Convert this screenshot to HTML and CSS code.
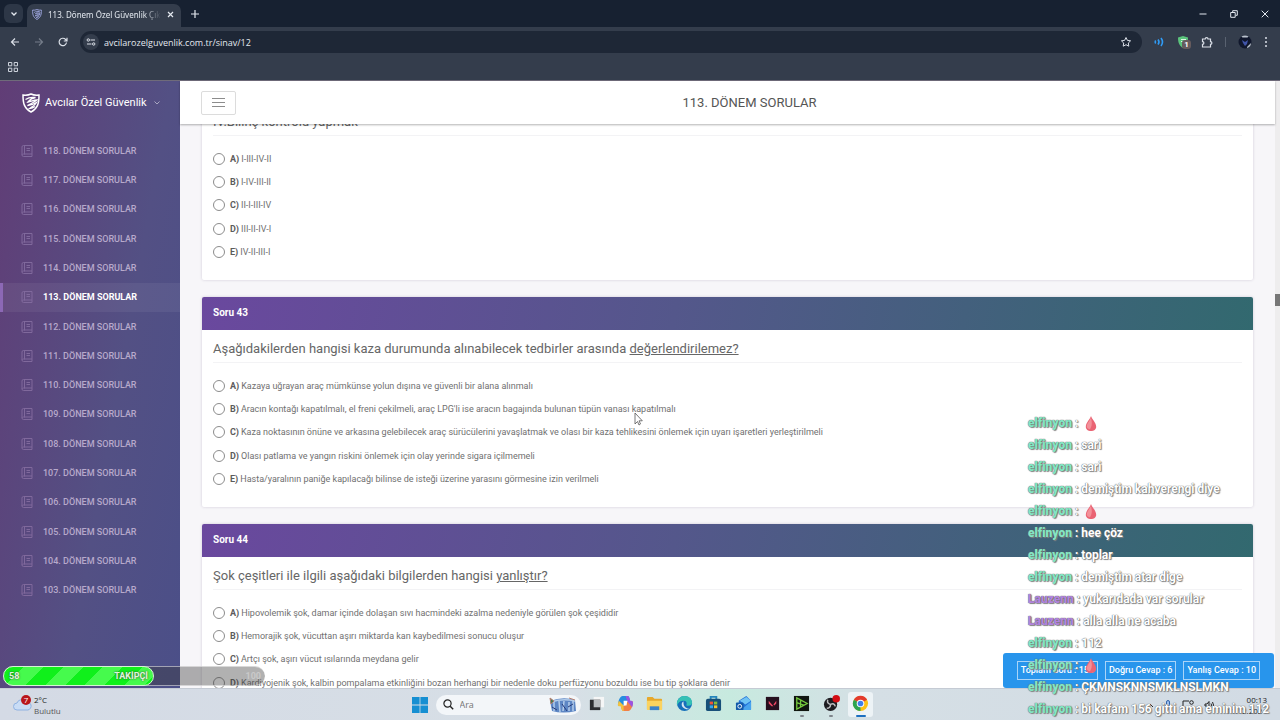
FILE: index.html
```
<!DOCTYPE html>
<html lang="tr">
<head>
    <meta charset="UTF-8">
    <meta name="viewport" content="width=device-width, initial-scale=1.0">
    <title>113. Dönem Özel Güvenlik Çıkmış Sorular</title>
    <link rel="stylesheet" href="styles.css">
</head>
<body>
    <svg class="symbols" aria-hidden="true">
        <symbol id="shield" viewBox="0 0 18 20">
            <path d="M9 1C6.500 2.200 3.500 2.300 1 2c0 7 .5 13 8 17 7.500-4 8-10 8-17-2.500.3-5.500.2-8-1z" fill="none" stroke="currentColor" stroke-width="1.500"/>
            <path d="M3.500 6.500C7 4 10 4 13.500 4.500 10 5 8 6.500 6 9c4-1 6-2 9-2-3 2.500-6 3.500-9.500 5.500 4-.5 6.500-1.500 9-3-1.500 3-4 4-7 6 2.500 0 4-.8 5.500-2" fill="none" stroke="currentColor" stroke-width="1.300"/>
        </symbol>
        <symbol id="book" viewBox="0 0 12 12">
            <path d="M2.500.5h8.500v11H2.500A1.500 1.500 0 0 1 1 10V2A1.500 1.500 0 0 1 2.500.5zM3.500.5v9M1 10c0-.5.5-1 1.500-1H11M5.500 3.500h3.500M5.500 5.500h3.500" fill="none" stroke="currentColor"/>
        </symbol>
        <symbol id="drop" viewBox="0 0 12 18">
            <path d="M6 1c1 3.500 5.500 7 5.500 11.500C11.500 15.500 9 17 6 17S.5 15.500.5 12.500C.5 8 5 4.500 6 1z" fill="#ea6474"/>
            <path d="M6 2c0 3.500 2.500 7-1 13-2 0-3.500-1-3.500-3C1.500 9 5 6 6 2z" fill="#f39099"/>
        </symbol>
    </svg>

    <!-- Browser -->
    <div class="tabstrip">
        <button class="tab-search" aria-label="Sekme ara"><svg width="8" height="8" viewBox="0 0 8 8"><path d="M1.500 2.500 4 5l2.500-2.500" fill="none" stroke="currentColor" stroke-width="1.300"/></svg></button>
        <div class="tab">
            <svg class="tab-icon"><use href="#shield"/></svg>
            <span class="tab-title">113. Dönem Özel Güvenlik Çıkmış</span>
            <button aria-label="Kapat"><svg width="7" height="7" viewBox="0 0 7 7"><path d="m1 1 5 5M6 1 1 6" stroke="currentColor" stroke-width="1.200"/></svg></button>
        </div>
        <button class="new-tab" aria-label="Yeni sekme"><svg width="8" height="8" viewBox="0 0 8 8"><path d="M4 0v8M0 4h8" stroke="currentColor" stroke-width="1.200"/></svg></button>
        <div class="window-buttons">
            <button aria-label="Küçült"><svg width="8" height="8" viewBox="0 0 8 8"><path d="M.5 4h7" stroke="currentColor"/></svg></button>
            <button aria-label="Geri yükle"><svg width="8" height="8" viewBox="0 0 8 8"><path d="M.7 2.500h4.500v4.800H.7zM2.700 2V.7h4.600v4.600H5.700" fill="none" stroke="currentColor"/></svg></button>
            <button aria-label="Kapat"><svg width="8" height="8" viewBox="0 0 8 8"><path d="m.7.7 6.600 6.600M7.300.7.7 7.300" stroke="currentColor"/></svg></button>
        </div>
    </div>
    <div class="toolbar">
        <button aria-label="Geri"><svg width="10" height="10" viewBox="0 0 10 10"><path d="M9 5H1.500M5 1.500 1.500 5 5 8.500" fill="none" stroke="currentColor" stroke-width="1.200"/></svg></button>
        <button class="dim" aria-label="İleri"><svg width="10" height="10" viewBox="0 0 10 10"><path d="M1 5h7.500M5 1.500 8.500 5 5 8.500" fill="none" stroke="currentColor" stroke-width="1.200"/></svg></button>
        <button aria-label="Yenile"><svg width="10" height="10" viewBox="0 0 10 10"><path d="M8.500 5.500A3.700 3.700 0 1 1 7.600 2.500L9 4M9 .8V4H5.800" fill="none" stroke="currentColor" stroke-width="1.200"/></svg></button>
        <div class="address">
            <span class="site-info"><svg width="10" height="8" viewBox="0 0 10 8"><path d="M4.500 2H9M1 6h4.500" stroke="currentColor" stroke-width="1.200"/><circle cx="2.300" cy="2" r="1.200" fill="none" stroke="currentColor"/><circle cx="7.700" cy="6" r="1.200" fill="none" stroke="currentColor"/></svg></span>
            <input type="text" aria-label="Adres" value="avcilarozelguvenlik.com.tr/sinav/12">
            <svg width="12" height="12" viewBox="0 0 12 12"><path d="m6 1.500 1.400 2.900 3.200.4-2.300 2.200.5 3.200L6 8.700l-2.800 1.500.5-3.200-2.300-2.200 3.200-.4z" fill="none" stroke="currentColor"/></svg>
        </div>
        <div class="extensions">
            <svg width="12" height="12" viewBox="0 0 12 12"><path d="M2 4.500q1 1.500 0 3M5 3.500q2 2.500 0 5M8 2q3 4 0 8" fill="none" stroke="#2f9bf5" stroke-width="1.600"/></svg>
            <span class="ext-badge"><svg width="12" height="12" viewBox="0 0 12 12"><path d="M1 1.500 6 0l5 1.500C11 7 9.500 10 6 12 2.500 10 1 7 1 1.500z" fill="#5bc47c"/><path d="M4 3.500h5M4 5.500h3" stroke="#dff5e5"/></svg><b>1</b></span>
            <svg width="12" height="12" viewBox="0 0 12 12"><path d="M1.500 3h2.700a1.400 1.400 0 0 1 2.800 0H9.500v2.600a1.400 1.400 0 0 1 0 2.800V11h-8V8.400a1.400 1.400 0 0 0 0-2.800z" fill="none" stroke="currentColor" stroke-width="1.200"/></svg>
            <i class="separator"></i>
            <svg class="avatar" width="14" height="14" viewBox="0 0 14 14"><circle cx="7" cy="7" r="6.500" fill="#10172c"/><path d="M3.500 1.500q3.500-2 7 0l-1 1h-5zM9 12l4-4q0 4-4 5z" fill="#b9c1cc"/><path d="M4 5l3 2 3-2-1 4-2 2-2-3z" fill="#4054a8"/></svg>
            <svg width="4" height="12" viewBox="0 0 4 12"><circle cx="2" cy="2" r="1"/><circle cx="2" cy="6" r="1"/><circle cx="2" cy="10" r="1"/></svg>
        </div>
    </div>
    <div class="bookmarks">
        <svg width="10" height="10" viewBox="0 0 10 10"><path d="M.5.500h3.300v3.300H.5zM6.200.500h3.300v3.300H6.200zM.5 6.200h3.300v3.300H.5zM6.200 6.200h3.300v3.300H6.200z" fill="none" stroke="currentColor"/></svg>
    </div>

    <!-- Site -->
    <div class="page">
        <aside class="sidebar">
            <a href="#" class="brand">
                <svg class="brand-logo"><use href="#shield"/></svg>
                Avcılar Özel Güvenlik
                <svg class="caret" width="6" height="4" viewBox="0 0 6 4"><path d="m.5.500 2.500 2.500L5.500.5" fill="none" stroke="currentColor"/></svg>
            </a>
            <nav class="menu">
                <a href="#"><svg><use href="#book"/></svg>118. DÖNEM SORULAR</a>
                <a href="#"><svg><use href="#book"/></svg>117. DÖNEM SORULAR</a>
                <a href="#"><svg><use href="#book"/></svg>116. DÖNEM SORULAR</a>
                <a href="#"><svg><use href="#book"/></svg>115. DÖNEM SORULAR</a>
                <a href="#"><svg><use href="#book"/></svg>114. DÖNEM SORULAR</a>
                <a href="#" class="active"><svg><use href="#book"/></svg>113. DÖNEM SORULAR</a>
                <a href="#"><svg><use href="#book"/></svg>112. DÖNEM SORULAR</a>
                <a href="#"><svg><use href="#book"/></svg>111. DÖNEM SORULAR</a>
                <a href="#"><svg><use href="#book"/></svg>110. DÖNEM SORULAR</a>
                <a href="#"><svg><use href="#book"/></svg>109. DÖNEM SORULAR</a>
                <a href="#"><svg><use href="#book"/></svg>108. DÖNEM SORULAR</a>
                <a href="#"><svg><use href="#book"/></svg>107. DÖNEM SORULAR</a>
                <a href="#"><svg><use href="#book"/></svg>106. DÖNEM SORULAR</a>
                <a href="#"><svg><use href="#book"/></svg>105. DÖNEM SORULAR</a>
                <a href="#"><svg><use href="#book"/></svg>104. DÖNEM SORULAR</a>
                <a href="#"><svg><use href="#book"/></svg>103. DÖNEM SORULAR</a>
            </nav>
        </aside>

        <main class="main">
            <header class="topbar">
                <button class="menu-toggle" aria-label="Menü"><svg width="13" height="9" viewBox="0 0 13 9"><path d="M0 .5h13M0 4.500h13M0 8.500h13" stroke="currentColor"/></svg></button>
                <h1>113. DÖNEM SORULAR</h1>
            </header>
            <div class="questions">
                <section class="card scrolled">
                    <div class="card-body">
                        <h2>IV.Bilinç kontrolü yapmak</h2>
                        <div class="options">
                            <label><input type="radio" name="q42"><b>A)</b> I-III-IV-II</label>
                            <label><input type="radio" name="q42"><b>B)</b> I-IV-III-II</label>
                            <label><input type="radio" name="q42"><b>C)</b> II-I-III-IV</label>
                            <label><input type="radio" name="q42"><b>D)</b> III-II-IV-I</label>
                            <label><input type="radio" name="q42"><b>E)</b> IV-II-III-I</label>
                        </div>
                    </div>
                </section>
                <section class="card">
                    <div class="card-header">Soru 43</div>
                    <div class="card-body">
                        <h2>Aşağıdakilerden hangisi kaza durumunda alınabilecek tedbirler arasında <u>değerlendirilemez?</u></h2>
                        <div class="options">
                            <label><input type="radio" name="q43"><b>A)</b> Kazaya uğrayan araç mümkünse yolun dışına ve güvenli bir alana alınmalı</label>
                            <label><input type="radio" name="q43"><b>B)</b> Aracın kontağı kapatılmalı, el freni çekilmeli, araç LPG'li ise aracın bagajında bulunan tüpün vanası kapatılmalı</label>
                            <label><input type="radio" name="q43"><b>C)</b> Kaza noktasının önüne ve arkasına gelebilecek araç sürücülerini yavaşlatmak ve olası bir kaza tehlikesini önlemek için uyarı işaretleri yerleştirilmeli</label>
                            <label><input type="radio" name="q43"><b>D)</b> Olası patlama ve yangın riskini önlemek için olay yerinde sigara içilmemeli</label>
                            <label><input type="radio" name="q43"><b>E)</b> Hasta/yaralının paniğe kapılacağı bilinse de isteği üzerine yarasını görmesine izin verilmeli</label>
                        </div>
                    </div>
                </section>
                <section class="card">
                    <div class="card-header">Soru 44</div>
                    <div class="card-body">
                        <h2>Şok çeşitleri ile ilgili aşağıdaki bilgilerden hangisi <u>yanlıştır?</u></h2>
                        <div class="options">
                            <label><input type="radio" name="q44"><b>A)</b> Hipovolemik şok, damar içinde dolaşan sıvı hacmindeki azalma nedeniyle görülen şok çeşididir</label>
                            <label><input type="radio" name="q44"><b>B)</b> Hemorajik şok, vücuttan aşırı miktarda kan kaybedilmesi sonucu oluşur</label>
                            <label><input type="radio" name="q44"><b>C)</b> Artçı şok, aşırı vücut ısılarında meydana gelir</label>
                            <label><input type="radio" name="q44"><b>D)</b> Kardiyojenik şok, kalbin pompalama etkinliğini bozan herhangi bir nedenle doku perfüzyonu bozuldu ise bu tip şoklara denir</label>
                        </div>
                    </div>
                </section>
            </div>
            <div class="score">
                <span>Toplam Soru : 156</span>
                <span>Doğru Cevap : 6</span>
                <span>Yanlış Cevap : 10</span>
            </div>
        </main>
        <div class="scrollbar"><i></i></div>
    </div>

    <!-- Taskbar -->
    <footer class="taskbar">
        <div class="weather">
            <svg width="20" height="18" viewBox="0 0 20 18"><path d="M4 16a3.500 3.500 0 0 1 0-7 5 5 0 0 1 9-1 4 4 0 0 1 2 8z" fill="#c9dcf5" stroke="#8fb2e2"/><circle cx="13" cy="6" r="5" fill="#b9161c"/><text x="13" y="9" text-anchor="middle">7</text></svg>
            <div>2°C<br><span>Bulutlu</span></div>
        </div>
        <div class="dock">
            <svg width="16" height="16" viewBox="0 0 16 16"><path d="M0 0h7.600v7.600H0zM8.400 0H16v7.600H8.400zM0 8.400h7.600V16H0zM8.400 8.400H16V16H8.400z" fill="#168fd2"/></svg>
            <label class="search">
                <svg width="11" height="11" viewBox="0 0 11 11"><circle cx="4.500" cy="4.500" r="3.600" fill="none" stroke="#222" stroke-width="1.200"/><path d="m7.200 7.200 3 3" stroke="#222" stroke-width="1.400"/></svg>
                <input type="text" placeholder="Ara" aria-label="Ara">
                <svg width="28" height="16" viewBox="0 0 28 16"><path d="M1 4q13-5 25-1l1 11q-13 3-24 0z" fill="#5d86c4"/><path d="M2 5q12-4 24-1M5 5v9M10 4l1 11M15 4l-1 10M20 5v9M24 4v10" fill="none" stroke="#b4cdea" stroke-width="1.500"/><path d="M1 1l4 3-3 3zM20 1l6 2" fill="#417b55" stroke="#b47f70"/><path d="M3 10l5 3m5-6 5 7m1-4 5-3" stroke="#273c7b"/></svg>
            </label>
            <div class="apps">
                <a href="#" aria-label="Görev görünümü"><svg viewBox="0 0 18 18"><path d="M6 2h11v11H6z" fill="#f5f6f6"/><path d="M2 5h11v11H2z" fill="#2b2c2e"/><path d="M6 5h7v8H6z" fill="#b8bbbd"/></svg></a>
                <a href="#" aria-label="Copilot"><svg viewBox="0 0 18 18"><path d="M6 1h5c2 0 2 2 3 5l-4 1-3 4H1c0-4 2-10 5-10z" fill="#268de0"/><path d="M12 17H7c-2 0-2-2-3-5l4-1 3-4h6c0 4-2 10-5 10z" fill="#f18047"/><path d="M11 1c2 0 2 2 3 5h1c3 0 2 4 1 7l-5-6-2-6z" fill="#9b54e0"/><path d="M7 17c-2 0-2-2-3-5H3c-3 0-2-3-1-6l5 5z" fill="#f4c23b"/><path d="M7 6h4l-1 5H7z" fill="#fff"/></svg></a>
                <a href="#" aria-label="Dosya Gezgini"><svg viewBox="0 0 18 18"><path d="M1 3q0-1 1-1h5l2 2h7q1 0 1 1v10H1z" fill="#e7a92b"/><path d="M1 6h16v9q0 1-1 1H2q-1 0-1-1z" fill="#fbd35f"/><path d="M4 12h10v4H4z" fill="#3d83ca"/></svg></a>
                <a href="#" aria-label="Edge"><svg viewBox="0 0 18 18"><circle cx="9" cy="9" r="8" fill="#1670ba"/><path d="M1 8C2 3 6 1 9 1c5 0 8 3 8 7 0 3-3 4-6 3 1-3 0-5-3-5S3 7 1 11z" fill="#35c1b5"/><path d="M8 7c-3 1-3 7 3 8 3 .5 5-1 6-3-2 5-10 2-9-5z" fill="#d4e4f2"/></svg></a>
                <a href="#" aria-label="Store"><svg viewBox="0 0 18 18"><path d="M6 5V2h6v3" fill="none" stroke="#2585bc" stroke-width="2"/><rect x="1" y="4" width="16" height="13" rx="2" fill="#175079"/><path d="M5 7h3.500v3H5z" fill="#ef5338"/><path d="M9.500 7H13v3H9.500z" fill="#83bd3b"/><path d="M5 11h3.500v3H5z" fill="#35a8ed"/><path d="M9.500 11H13v3H9.500z" fill="#fac12d"/></svg></a>
                <a href="#" aria-label="Outlook"><svg viewBox="0 0 18 18"><path d="M4 6 12 1l5 5v9q0 1-1 1H5q-1 0-1-1z" fill="#2371d8"/><path d="m5 6 7-4 5 4-6 4z" fill="#70c4f4"/><path d="M17 7v8q0 1-1 1H6z" fill="#48a4ee"/><rect x="1" y="8" width="8" height="8" rx="1" fill="#145aaa"/><circle cx="5" cy="12" r="2" fill="none" stroke="#fff"/></svg></a>
                <a href="#" aria-label="Valorant"><svg viewBox="0 0 18 18"><path d="M2 2h14v14H2z" fill="#26101e"/><path d="m5 6 5 6H8L5 9zM13 6v3l-2 2-1-1z" fill="#ef4865"/></svg></a>
                <a href="#" class="running" aria-label="Oyun"><svg viewBox="0 0 18 18"><path d="M1 1h16v16H1z" fill="#101610"/><path d="M4 3v12L15 9zM4 8l8 3M8 5v8" fill="none" stroke="#75c93e" stroke-width="1.400"/></svg></a>
                <a href="#" class="running" aria-label="OBS"><svg viewBox="0 0 18 18"><circle cx="8" cy="10" r="7" fill="#1d1c20"/><path d="M8 10q-4-1-3-5m3 5q4-2 5 2m-5-2q0 4-4 4" fill="none" stroke="#bdbdbf" stroke-width="1.500"/><circle cx="14" cy="4" r="4" fill="#d30c13"/></svg></a>
                <a href="#" class="running focused" aria-label="Chrome"><svg viewBox="0 0 18 18"><circle cx="9" cy="9" r="8" fill="#fbc116"/><path d="M9 9 2 5a8 8 0 0 1 14 0z" fill="#e33b2e"/><path d="M9 9v8A8 8 0 0 1 2 5z" fill="#2da44f"/><circle cx="9" cy="9" r="4" fill="#fff"/><circle cx="9" cy="9" r="3" fill="#3f7fe8"/></svg></a>
            </div>
        </div>
        <div class="tray">
            <svg width="8" height="8" viewBox="0 0 8 8"><path d="m1 6 3-3 3 3" fill="none" stroke="#222"/></svg>
            <svg width="8" height="10" viewBox="0 0 8 10"><rect x="2.500" y=".5" width="3" height="6" rx="1.500" fill="#9dc0ef" stroke="#3264ac"/><path d="M1 5q3 5 6 0M4 8v2" fill="none" stroke="#3264ac"/></svg>
            <svg width="12" height="10" viewBox="0 0 12 10"><path d="M7 1H1v7h8V6M3 9.500h4" fill="none" stroke="#222"/><circle cx="9.500" cy="2.500" r="1.800" fill="none" stroke="#222"/></svg>
            <svg width="10" height="10" viewBox="0 0 10 10"><path d="M1 4h2l2-2.500v7L3 6H1zM7 3.500q1 1.500 0 3M8.500 2q2 3 0 6" fill="none" stroke="#222"/></svg>
            <div class="clock">00:13<br>11.12.2024</div>
        </div>
    </footer>

    <!-- Stream overlays -->
    <div class="goal">
        <div class="goal-fill"><span>58</span><span>TAKİPÇİ</span></div>
        <span class="goal-target">100</span>
    </div>
    <div class="chat">
        <p><b>elfinyon</b> : <svg><use href="#drop"/></svg></p>
        <p><b>elfinyon</b> : sari</p>
        <p><b>elfinyon</b> : sari</p>
        <p><b>elfinyon</b> : demiştim kahverengi diye</p>
        <p><b>elfinyon</b> : <svg><use href="#drop"/></svg></p>
        <p><b>elfinyon</b> : hee çöz</p>
        <p><b>elfinyon</b> : toplar</p>
        <p><b>elfinyon</b> : demiştim atar dige</p>
        <p><b class="purple">Lauzenn</b> : yukarıdada var sorular</p>
        <p><b class="purple">Lauzenn</b> : alla alla ne acaba</p>
        <p><b>elfinyon</b> : 112</p>
        <p><b>elfinyon</b> : <svg><use href="#drop"/></svg></p>
        <p><b>elfinyon</b> : ÇKMNSKNNSMKLNSLMKN</p>
        <p><b>elfinyon</b> : bi kafam 156 gitti ama eminim 112</p>
    </div>
    <svg class="cursor" viewBox="0 0 9 14"><path d="M1 1v11l2.500-2.500L5 13l1.500-1L5 8.800h3.300z" fill="#fff" stroke="#555" stroke-width=".8"/></svg>
</body>
</html>
```

FILE: styles.css
```
* {
    box-sizing: border-box;
}
body {
    display: flex;
    flex-direction: column;
    height: 100vh;
    margin: 0;
    overflow: hidden;
    position: relative;
    font-family: Roboto, sans-serif;
    background-color: #f7f6f9;
}
button {
    display: flex;
    align-items: center;
    justify-content: center;
    padding: 0;
    border: none;
    background: none;
    color: inherit;
    cursor: pointer;
}
a {
    color: inherit;
    text-decoration: none;
}
svg {
    flex-shrink: 0;
}
.symbols {
    position: absolute;
    width: 0;
    height: 0;
}

/* Browser */
.tabstrip {
    display: flex;
    align-items: center;
    height: 27px;
    flex-shrink: 0;
    padding-left: 4px;
    background-color: #172131;
    color: #e3e8ef;
    font-family: "Open Sans", sans-serif;
}
.tab-search {
    width: 19px;
    height: 19px;
    border-radius: 6px;
    background-color: #2d3747;
}
.tab {
    display: flex;
    align-items: center;
    align-self: flex-end;
    gap: 6px;
    width: 154px;
    height: 23px;
    margin-left: 4px;
    padding: 0 7px 3px 5px;
    border-radius: 7px 7px 0 0;
    background-color: #343d4c;
    font-size: 9px;
}
.tab-icon {
    width: 10px;
    height: 11px;
    color: #aab2f0;
}
.tab-title {
    flex: 1;
    overflow: hidden;
    font-family: "Noto Sans", sans-serif;
    font-size: 8px;
    white-space: nowrap;
    mask-image: linear-gradient(to right, #000 85%, transparent);
}
.new-tab {
    width: 18px;
    height: 18px;
    margin-left: 5px;
}
.window-buttons {
    display: flex;
    margin-left: auto;
}
.window-buttons button {
    width: 31px;
    height: 27px;
}
.toolbar {
    display: flex;
    align-items: center;
    height: 30px;
    flex-shrink: 0;
    padding: 0 12px 0 3px;
    background-color: #343d4c;
    color: #dbe0e8;
}
.toolbar button {
    width: 24px;
    height: 22px;
}
.toolbar .dim {
    color: #747c89;
}
.address {
    display: flex;
    align-items: center;
    flex: 1;
    gap: 5px;
    height: 22px;
    margin: 0 11px 0 5px;
    padding: 0 10px 0 3px;
    border-radius: 11px;
    background-color: #1e2736;
}
.site-info {
    display: flex;
    align-items: center;
    justify-content: center;
    width: 16px;
    height: 16px;
    border-radius: 8px;
    background-color: #343d4c;
}
.address input {
    flex: 1;
    padding: 0;
    border: none;
    outline: none;
    background: none;
    color: #e3e8ef;
    font-family: "Open Sans", sans-serif;
    font-size: 9px;
}
.extensions {
    display: flex;
    align-items: center;
    gap: 12px;
    fill: currentColor;
}
.ext-badge {
    display: flex;
    position: relative;
}
.ext-badge b {
    position: absolute;
    top: 4px;
    left: 5px;
    width: 9px;
    border-radius: 3px;
    background-color: #665b5d;
    color: #fff;
    font-size: 8px;
    line-height: 9px;
    text-align: center;
}
.separator {
    width: 1px;
    height: 10px;
    background-color: #596270;
}
.bookmarks {
    display: flex;
    align-items: center;
    height: 24px;
    flex-shrink: 0;
    padding: 0 8px 4px;
    background-color: #343d4c;
    border-bottom: 1px solid #6f6b7a;
    color: #cdd3dc;
}

/* Site */
.page {
    display: flex;
    flex: 1;
    min-height: 0;
}
.sidebar {
    width: 180px;
    flex-shrink: 0;
    background: linear-gradient(100deg, #613d76, #535084 60%, #4b4f88);
    color: #fff;
}
.brand {
    display: flex;
    align-items: center;
    gap: 5px;
    height: 43px;
    padding: 0 20px 0 22px;
    font-size: 11px;
    white-space: nowrap;
}
.brand-logo {
    width: 18px;
    height: 20px;
}
.caret {
    margin-left: auto;
    opacity: 0.5;
}
.menu {
    display: grid;
    grid-template-rows: repeat(16, 1fr);
    height: 469px;
    margin-top: 12px;
}
.menu a {
    display: flex;
    align-items: center;
    gap: 10px;
    padding-left: 18px;
    border-left: 3px solid transparent;
    color: #b7a9cb;
    font-size: 9px;
    font-weight: 500;
}
.menu svg {
    width: 12px;
    height: 12px;
    color: #80699c;
}
.menu .active {
    border-left-color: #8c68b5;
    background-color: rgba(255, 255, 255, 0.06);
    color: #fff;
    font-weight: 700;
}
.main {
    display: flex;
    flex-direction: column;
    flex: 1;
    min-width: 0;
    position: relative;
}
.topbar {
    display: flex;
    align-items: center;
    gap: 9px;
    height: 43px;
    flex-shrink: 0;
    padding: 0 21px;
    background-color: #fff;
    box-shadow: 0 1px 2px rgba(0, 0, 0, 0.3);
    z-index: 1;
}
.menu-toggle {
    width: 35px;
    height: 24px;
    border: 1px solid #dcdcdc;
    border-radius: 2px;
    color: #8c8c8c;
}
.topbar h1 {
    flex: 1;
    margin: 0;
    color: #555;
    font-size: 13px;
    font-weight: 400;
    text-align: center;
}
.questions {
    flex: 1;
    min-height: 0;
    padding: 0 22px;
    overflow: hidden;
}
.card {
    margin-bottom: 17px;
    border-radius: 2px;
    background-color: #fff;
    box-shadow: 0 0 3px rgba(60, 40, 90, 0.2);
}
.scrolled {
    margin-top: -21px;
}
.card-header {
    height: 33px;
    padding: 0 11px;
    border-radius: 2px 2px 0 0;
    background: linear-gradient(100deg, #6a489e, #54578b 45%, #32696f);
    color: #fff;
    font-size: 10px;
    font-weight: 700;
    line-height: 32px;
}
.card-body {
    padding: 0 11px 16px;
}
.card h2 {
    height: 33px;
    margin: 0 0 11px;
    border-bottom: 1px solid #f3f3f5;
    color: #666;
    font-size: 13px;
    font-weight: 400;
    line-height: 37px;
}
.options {
    display: grid;
    grid-template-rows: repeat(5, 1fr);
    height: 117px;
}
.options label {
    display: flex;
    align-items: center;
    gap: 2px;
    color: #707070;
    font-size: 9px;
    white-space: nowrap;
}
.options b {
    color: #5c5c5c;
}
.options input {
    appearance: none;
    width: 12px;
    height: 12px;
    margin: 0 3px 0 0;
    border: 1px solid #8c8c8c;
    border-radius: 50%;
}
.score {
    display: flex;
    align-items: center;
    gap: 7px;
    position: absolute;
    right: 1px;
    bottom: 0;
    height: 35px;
    padding: 0 14px;
    border-radius: 3px;
    background-color: #2895ec;
    color: #fff;
    font-size: 9px;
    font-weight: 500;
    z-index: 1;
}
.score span {
    padding: 0 3px;
    border: 1px solid #a9d4f8;
    line-height: 17px;
    white-space: nowrap;
}
.scrollbar {
    width: 5px;
    padding-top: 213px;
    background-color: #eeedee;
}
.scrollbar i {
    display: block;
    height: 12px;
    background-color: #777;
}

/* Taskbar */
.taskbar {
    display: grid;
    grid-template-columns: 1fr auto 1fr;
    align-items: center;
    height: 32px;
    flex-shrink: 0;
    padding: 0 13px;
    border-top: 1px solid #c5cbd4;
    background: linear-gradient(to right, #d4dae5, #d7dfe6 45%, #c7eadf 57%, #d5dfe5 68%, #d2dbe4);
    color: #222;
    font-family: "Open Sans", sans-serif;
    font-size: 8px;
    line-height: 11px;
}
.weather {
    display: flex;
    gap: 1px;
}
.weather text {
    fill: #fff;
    font-size: 8px;
}
.weather span {
    color: #555;
}
.dock {
    display: flex;
    align-items: center;
    gap: 8px;
    padding-left: 7px;
}
.search {
    display: flex;
    align-items: center;
    gap: 6px;
    width: 145px;
    height: 20px;
    padding: 0 4px 0 7px;
    border-radius: 10px;
    background-color: #f3f6f9;
}
.search input {
    flex: 1;
    min-width: 0;
    padding: 0;
    border: none;
    outline: none;
    background: none;
    font-family: "Open Sans", sans-serif;
    font-size: 9px;
}
.apps {
    display: grid;
    grid-template-columns: repeat(10, 1fr);
    width: 294px;
    margin-left: -7px;
}
.apps a {
    display: flex;
    justify-content: center;
    position: relative;
    padding: 3px 0 5px;
}
.apps svg {
    width: 17px;
    height: 17px;
}
.apps .focused {
    margin: 0 2px;
    border-radius: 3px;
    background-color: #edf3f6;
}
.running::after {
    content: "";
    position: absolute;
    bottom: 0;
    width: 4px;
    height: 2px;
    border-radius: 1px;
    background-color: #80868c;
}
.focused::after {
    width: 10px;
    background-color: #1c6fc0;
}
.tray {
    display: flex;
    align-items: center;
    justify-content: flex-end;
    gap: 10px;
}
.clock {
    margin-left: 2px;
    text-align: right;
}

/* Stream overlays */
.goal {
    display: flex;
    align-items: center;
    justify-content: space-between;
    position: absolute;
    left: 3px;
    bottom: 34px;
    width: 262px;
    height: 20px;
    border-radius: 10px;
    background-color: rgba(60, 60, 60, 0.4);
    border-top: 1px solid rgba(255, 255, 255, 0.5);
    border-bottom: 1px solid rgba(255, 255, 255, 0.5);
    color: #e0f5de;
    font-size: 9px;
    font-weight: 700;
    z-index: 2;
}
.goal-fill {
    display: flex;
    align-items: center;
    justify-content: space-between;
    width: 151px;
    height: 20px;
    padding: 0 5px;
    border: 1px solid #d5f5d3;
    border-radius: 10px;
    background: repeating-linear-gradient(135deg, #10f01b 0 14px, #46fa4d 14px 28px);
    text-shadow: 0 0 2px #333;
}
.goal-target {
    padding-right: 4px;
    color: #c9c9c9;
}
.chat {
    position: absolute;
    left: calc(100% - 252px);
    bottom: 0;
    color: #fff;
    font-size: 12px;
    font-weight: 700;
    line-height: 22px;
    white-space: nowrap;
    text-shadow: 0 0 1px #666, 0 0 1px #666, 1px 1px 1px #888;
    z-index: 3;
}
.chat p {
    height: 22px;
    margin: 0;
}
.chat b {
    color: #83e6c4;
}
.chat .purple {
    color: #b284dd;
}
.chat svg {
    width: 12px;
    height: 17px;
    margin-left: 4px;
    vertical-align: middle;
}
.cursor {
    position: absolute;
    left: 634px;
    top: 412px;
    width: 9px;
    height: 14px;
    z-index: 3;
}
```
